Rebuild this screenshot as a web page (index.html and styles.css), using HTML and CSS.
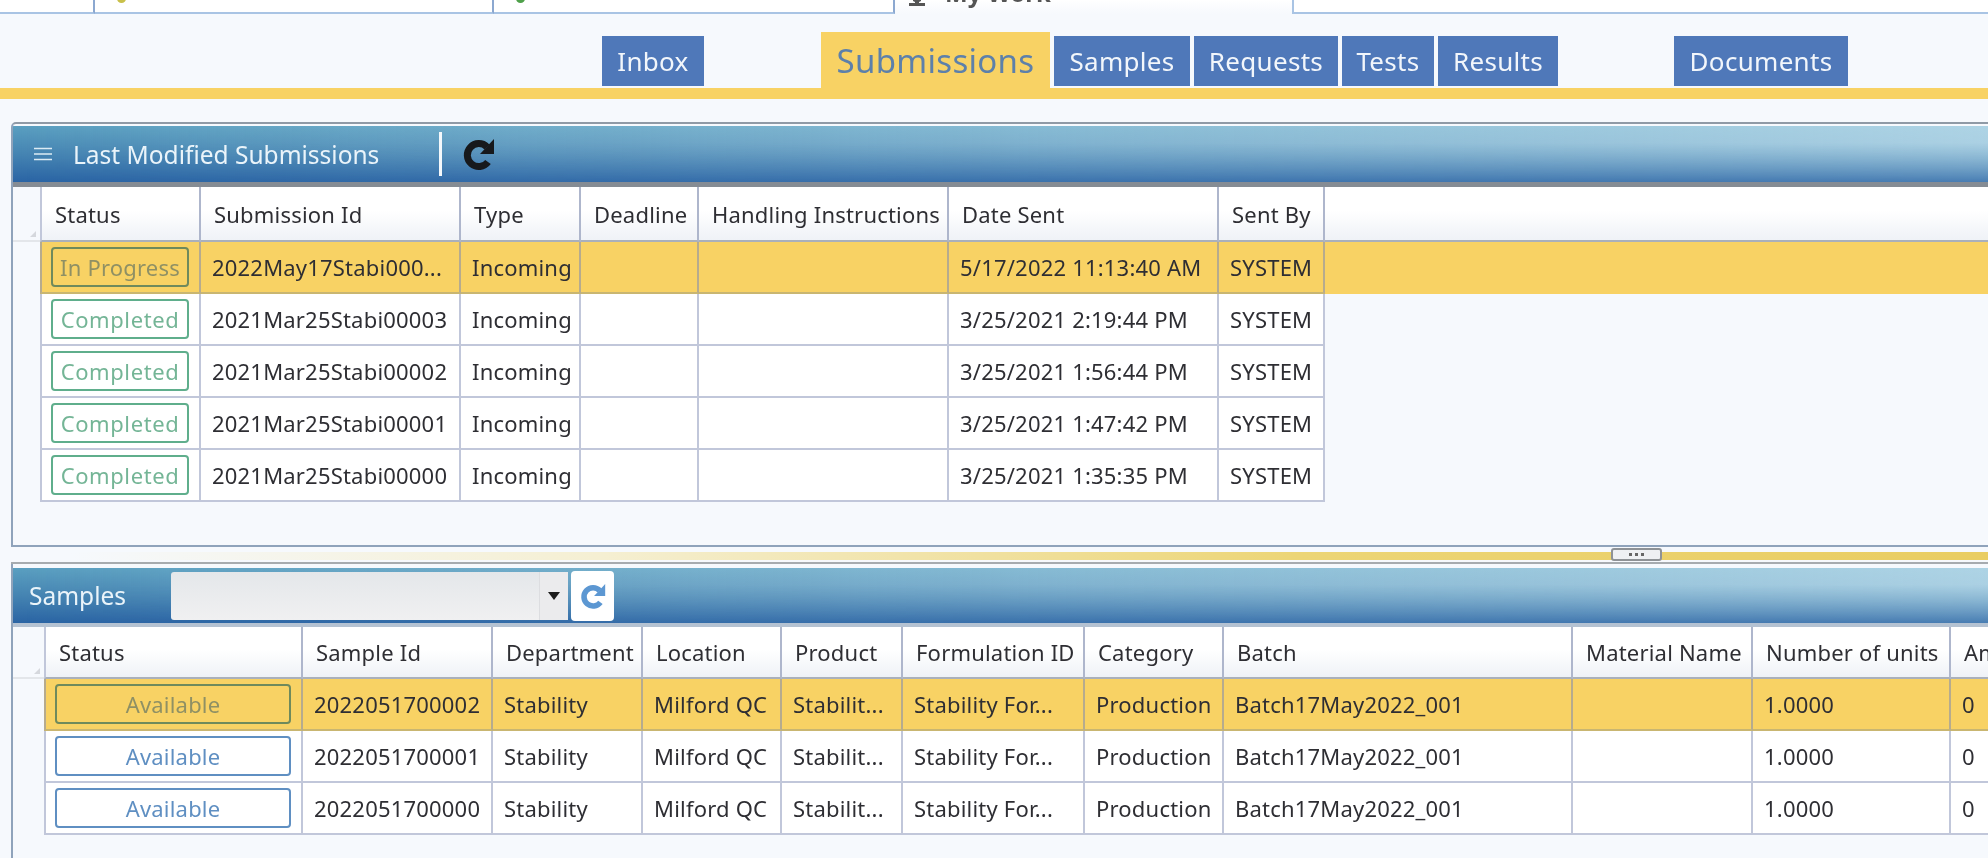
FILE: index.html
```html
<!DOCTYPE html>
<html lang="en">
<head>
  <meta charset="UTF-8" />
  <title>My Work</title>
  <link rel="stylesheet" href="styles.css">
</head>
<body>

  <div class="doc-tabs">
    <div class="doc-tab tab-a"></div>
    <div class="doc-tab tab-b"><span class="dot dot-yellow"></span></div>
    <div class="doc-tab tab-c"><span class="dot dot-green"></span></div>
    <div class="doc-tab tab-work">
      <svg class="person" viewBox="0 0 20 8"><path d="M6 0h8v3l-2 1v1h6v3H2V5h6V4L6 3z"/></svg>
      <span class="work-label">My Work</span>
    </div>
    <div class="doc-tab tab-rest"></div>
  </div>

  <div class="nav">
    <a class="nav-btn btn-inbox">Inbox</a>
    <a class="nav-active">Submissions</a>
    <a class="nav-btn btn-samples">Samples</a>
    <a class="nav-btn btn-requests">Requests</a>
    <a class="nav-btn btn-tests">Tests</a>
    <a class="nav-btn btn-results">Results</a>
    <a class="nav-btn btn-docs">Documents</a>
  </div>
  <div class="nav-rule"></div>

  <div class="panel panel-top">
    <div class="panel-head head-top">
      <svg class="burger" viewBox="0 0 18 14"><path d="M0 1.5h18M0 7h18M0 12.5h18"/></svg>
      <span class="panel-title">Last Modified Submissions</span>
      <span class="head-sep"></span>
      <svg class="reload" viewBox="0 0 34 36"><path class="reload-arc" d="M27 26a11.500 11.500 0 1 1-1-15"/><path class="reload-tip" d="M33 3v15H19z"/></svg>
    </div>
    <table class="grid grid-subs">
      <colgroup>
        <col class="c-corner"><col class="c-status"><col class="c-id"><col class="c-type"><col class="c-deadline"><col class="c-handling"><col class="c-date"><col class="c-by"><col>
      </colgroup>
      <tr>
        <th class="corner"><i class="corner-mark"></i></th><th class="first">Status</th><th>Submission Id</th><th>Type</th><th>Deadline</th><th>Handling Instructions</th><th>Date Sent</th><th>Sent By</th><th class="filler"></th>
      </tr>
      <tr class="selected">
        <td class="row-head"></td><td class="first"><span class="pill pill-active">In Progress</span></td><td>2022May17Stabi000...</td><td>Incoming</td><td></td><td></td><td>5/17/2022 11:13:40 AM</td><td>SYSTEM</td><td class="filler"></td>
      </tr>
      <tr>
        <td class="row-head"></td><td class="first"><span class="pill pill-done">Completed</span></td><td>2021Mar25Stabi00003</td><td>Incoming</td><td></td><td></td><td>3/25/2021 2:19:44 PM</td><td>SYSTEM</td><td class="filler"></td>
      </tr>
      <tr>
        <td class="row-head"></td><td class="first"><span class="pill pill-done">Completed</span></td><td>2021Mar25Stabi00002</td><td>Incoming</td><td></td><td></td><td>3/25/2021 1:56:44 PM</td><td>SYSTEM</td><td class="filler"></td>
      </tr>
      <tr>
        <td class="row-head"></td><td class="first"><span class="pill pill-done">Completed</span></td><td>2021Mar25Stabi00001</td><td>Incoming</td><td></td><td></td><td>3/25/2021 1:47:42 PM</td><td>SYSTEM</td><td class="filler"></td>
      </tr>
      <tr>
        <td class="row-head"></td><td class="first"><span class="pill pill-done">Completed</span></td><td>2021Mar25Stabi00000</td><td>Incoming</td><td></td><td></td><td>3/25/2021 1:35:35 PM</td><td>SYSTEM</td><td class="filler"></td>
      </tr>
    </table>
  </div>

  <div class="splitter"><span class="grip"><i></i><i></i><i></i></span></div>

  <div class="panel panel-bottom">
    <div class="panel-head head-bottom">
      <span class="panel-title samples-title">Samples</span>
      <div class="combo"><span class="combo-arrow"></span></div>
      <div class="reload-btn">
        <svg class="reload reload-blue" viewBox="0 0 34 36"><path class="reload-arc" d="M27 26a11.500 11.500 0 1 1-1-15"/><path class="reload-tip" d="M33 3v15H19z"/></svg>
      </div>
    </div>
    <table class="grid grid-samples">
      <colgroup>
        <col class="s-corner"><col class="s-status"><col class="s-id"><col class="s-dept"><col class="s-loc"><col class="s-prod"><col class="s-form"><col class="s-cat"><col class="s-batch"><col class="s-mat"><col class="s-num"><col class="s-amt">
      </colgroup>
      <tr>
        <th class="corner"><i class="corner-mark"></i></th><th class="first">Status</th><th>Sample Id</th><th>Department</th><th>Location</th><th>Product</th><th>Formulation ID</th><th>Category</th><th>Batch</th><th>Material Name</th><th>Number of units</th><th>Amount</th>
      </tr>
      <tr class="selected">
        <td class="row-head"></td><td class="first"><span class="pill pill-wide pill-active">Available</span></td><td>2022051700002</td><td>Stability</td><td>Milford QC</td><td>Stabilit...</td><td>Stability For...</td><td>Production</td><td>Batch17May2022_001</td><td></td><td>1.0000</td><td>0</td>
      </tr>
      <tr>
        <td class="row-head"></td><td class="first"><span class="pill pill-wide pill-free">Available</span></td><td>2022051700001</td><td>Stability</td><td>Milford QC</td><td>Stabilit...</td><td>Stability For...</td><td>Production</td><td>Batch17May2022_001</td><td></td><td>1.0000</td><td>0</td>
      </tr>
      <tr>
        <td class="row-head"></td><td class="first"><span class="pill pill-wide pill-free">Available</span></td><td>2022051700000</td><td>Stability</td><td>Milford QC</td><td>Stabilit...</td><td>Stability For...</td><td>Production</td><td>Batch17May2022_001</td><td></td><td>1.0000</td><td>0</td>
      </tr>
    </table>
  </div>

</body>
</html>
```

FILE: styles.css
```css
* { box-sizing: border-box; }
html, body {
  margin: 0; padding: 0; height: 100%;
  overflow: hidden;
  background: #f6f9fd;
  font-family: "Noto Sans", "Open Sans", sans-serif;
  color: #2e2e33;
}
body { filter: blur(0.4px); }

/* clipped document tabs along the top edge */
.doc-tabs {
  display: flex;
  height: 14px;
  background: #fff;
}
.doc-tab {
  border-bottom: 2px solid #a9c4e4;
  border-right: 2px solid #8ca8d0;
  overflow: hidden;
  position: relative;
}
.tab-a { width: 95px; }
.tab-b { width: 399px; }
.tab-c { width: 401px; }
.tab-work {
  width: 399px;
  border-bottom: none;
  border-right: 2px solid #a9c4e4;
  background: linear-gradient(#fff, #f6f9fd);
}
.tab-rest {
  flex: 1;
  border-right: none;
}
.dot {
  position: absolute;
  top: -6px;
  width: 9px; height: 9px;
  border-radius: 50%;
}
.dot-yellow { left: 22px; background: #c9c04a; }
.dot-green { left: 22px; background: #4fa04a; }
.person {
  position: absolute;
  left: 12px; top: -2px;
  width: 20px; height: 8px;
  fill: #555;
}
.work-label {
  position: absolute;
  left: 50px; top: -24px;
  font-size: 24px;
  font-weight: bold;
  color: #555;
  white-space: nowrap;
}

/* section buttons */
.nav {
  display: flex;
  align-items: flex-end;
  height: 74px;
  padding: 0 0 2px 602px;
  gap: 4px;
  font-size: 26px;
  letter-spacing: .3px;
}
.nav a { display: flex; align-items: center; justify-content: center; }
.nav-btn {
  height: 50px;
  background: #4f78b9;
  color: #f2f6fb;
}
.btn-inbox { width: 102px; margin-right: 113px; }
.btn-samples { width: 136px; }
.btn-requests { width: 144px; }
.btn-tests { width: 92px; }
.btn-results { width: 120px; margin-right: 112px; }
.btn-docs { width: 174px; }
.nav-active {
  width: 229px;
  height: 56px;
  margin-bottom: -2px;
  background: #f8d264;
  color: #5d80aa;
  font-size: 33px;
}
.nav-rule {
  height: 11px;
  background: #f8d264;
  margin-bottom: 23px;
}

/* panels */
.panel {
  margin-left: 11px;
  border-left: 2px solid #8fa3bb;
  border-top: 2px solid #8f9aa6;
  border-top-left-radius: 5px;
  overflow: hidden;
}
.panel-top {
  height: 425px;
  border-bottom: 2px solid #8fa3bb;
}
.panel-head {
  display: flex;
  align-items: center;
  margin-top: 2px;
  position: relative;
  isolation: isolate;
  background: linear-gradient(#5a9fc0, #4584b2 50%, #2a64a4);
  color: #eaf4fa;
  font-size: 24.5px;
}
/* the bar lightens to the right, mostly along its top half */
.panel-head::before {
  content: "";
  position: absolute;
  inset: 0;
  z-index: -1;
  background: linear-gradient(to right, rgba(195,225,238,0) 0%, rgba(195,225,238,.45) 55%, rgba(195,225,238,.8) 100%);
  -webkit-mask-image: linear-gradient(#000 30%, rgba(0,0,0,.25));
  mask-image: linear-gradient(#000 30%, rgba(0,0,0,.25));
}
.head-top {
  height: 56px;
  padding-left: 21px;
}
.head-bottom {
  height: 55px;
  margin-top: 4px;
  padding-left: 16px;
}
.burger {
  width: 18px; height: 14px;
  margin-right: 21px;
  fill: none;
  stroke: #dcebf4;
  stroke-width: 1.6;
}
.panel-title { white-space: nowrap; }
.head-sep {
  width: 3px; height: 44px;
  background: #f4f8fb;
  margin-left: 60px;
  margin-right: 19px;
}
.reload { width: 34px; height: 36px; }
.reload-arc { fill: none; stroke: #17191c; stroke-width: 7; }
.reload-tip { fill: #17191c; }
.reload-blue { width: 27px; height: 32px; }
.reload-blue .reload-arc { stroke: #5c97d2; }
.reload-blue .reload-tip { fill: #5c97d2; }

.samples-title { width: 142px; }
.combo {
  width: 397px; height: 48px;
  display: flex;
  justify-content: flex-end;
  align-items: center;
  background: linear-gradient(#e4e7ea, #f0f0f1);
  border-radius: 3px 0 0 3px;
}
.combo-arrow {
  width: 29px; height: 48px;
  background: #ebebed;
  border-left: 1px solid #dcdde0;
  display: flex;
  align-items: center;
  justify-content: center;
}
.combo-arrow::after {
  content: "";
  border-left: 6px solid transparent;
  border-right: 6px solid transparent;
  border-top: 8px solid #1c1c1c;
}
.reload-btn {
  width: 43px; height: 50px;
  margin-left: 3px;
  background: #fff;
  border-radius: 4px;
  display: flex;
  align-items: center;
  justify-content: center;
}

/* tables */
.grid {
  table-layout: fixed;
  width: 100%;
  border-collapse: separate;
  border-spacing: 0;
  font-size: 22px;
  letter-spacing: .2px;
}
.grid-subs { border-top: 5px solid #858c94; }
.grid-samples { border-top: 4px solid #b4c2d2; }
.grid th {
  height: 55px;
  padding: 0 0 0 13px;
  font-weight: normal;
  text-align: left;
  background: linear-gradient(#fff 45%, #eff2f7);
  border-right: 2px solid #aeb6cc;
  border-bottom: 2px solid #aab0bb;
  white-space: nowrap;
  overflow: hidden;
}
.grid-samples th { height: 52px; }
.grid td {
  height: 52px;
  padding: 0 0 0 11px;
  background: #fff;
  border-right: 2px solid #c1c7da;
  border-bottom: 2px solid #c1c7da;
  white-space: nowrap;
  overflow: hidden;
}
.grid .first { border-left: 2px solid #c1c7da; padding-left: 9px; }
.grid th.first { padding-left: 13px; }
.grid .corner { background: none; border-right: none; position: relative; border-bottom: 2px solid #e3e6ea; }
.grid .row-head { background: none; border: none; }
.grid .filler { border-right: none; }
.grid td.filler { border-bottom: none; background: none; }
.grid .selected td { background: #f8d264; border-bottom-color: #c9b671; border-right-color: #b6ab8e; }
.grid .selected td.first { border-left-color: #b6ab8e; }
.grid .selected td.row-head { background: none; }
.corner-mark {
  position: absolute;
  right: 4px; bottom: 3px;
  border-left: 6px solid transparent;
  border-bottom: 6px solid #d5d8dd;
}

.c-corner { width: 27px; }
.c-status { width: 161px; }
.c-id { width: 260px; }
.c-type { width: 120px; }
.c-deadline { width: 118px; }
.c-handling { width: 250px; }
.c-date { width: 270px; }
.c-by { width: 106px; }

.s-corner { width: 31px; }
.s-status { width: 259px; }
.s-id { width: 190px; }
.s-dept { width: 150px; }
.s-loc { width: 139px; }
.s-prod { width: 121px; }
.s-form { width: 182px; }
.s-cat { width: 139px; }
.s-batch { width: 349px; }
.s-mat { width: 180px; }
.s-num { width: 198px; }
.s-amt { width: 150px; }

.pill {
  display: flex;
  align-items: center;
  justify-content: center;
  width: 138px; height: 40px;
  background: #fff;
  border: 2px solid #5fae8c;
  border-radius: 4px;
  white-space: nowrap;
}
.pill-wide { width: 236px; }
.pill-done { color: #74b596; letter-spacing: .6px; }
.pill-free { color: #5f8fc2; border-color: #5f8fc2; }
.pill-active {
  background: #f8d264;
  border-color: #6f8a5c;
  color: #8f9064;
}

/* splitter between the two panels */
.splitter {
  height: 17px;
  margin-left: 11px;
  display: flex;
  align-items: center;
  background:
    linear-gradient(#f6f9fd 5px, transparent 5px, transparent 13px, #f6f9fd 13px),
    linear-gradient(to right, #f6f9fd 3%, #f5efd2 30%, #ecd576 65%, #e9cd62);
  border-bottom: 2px solid #a6abaf;
}
.grip {
  display: flex;
  justify-content: center;
  align-items: center;
  gap: 3px;
  margin-left: 1600px;
  width: 51px; height: 13px;
  background: #eef0f3;
  border: 2px solid #8e9296;
  border-radius: 3px;
}
.grip i {
  width: 3px; height: 3px;
  background: #666;
}
.panel-bottom {
  height: 300px;
  border-top: none;
  border-radius: 0;
  overflow: hidden;
}
```
